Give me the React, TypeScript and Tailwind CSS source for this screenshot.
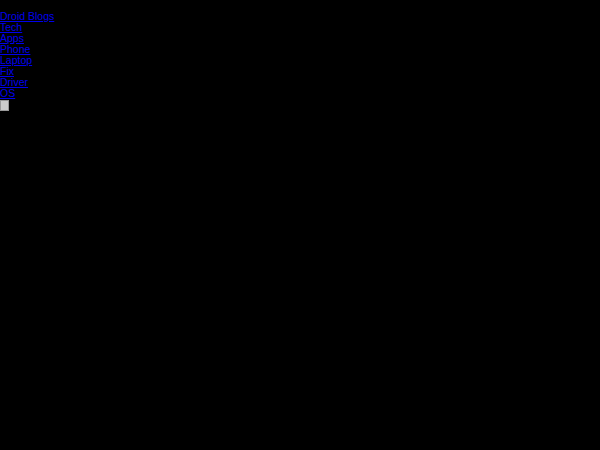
import React from "react";

const links = ["Droid Blogs", "Tech", "Apps", "Phone", "Laptop", "Fix", "Driver", "OS"];

export default function App() {
  return (
    <div className="w-[600px] h-[450px] bg-black pt-[11px] font-['Liberation_Sans',Arial,sans-serif] text-[10.5px] leading-[11px]">
      <ul className="flex flex-col">
        {links.map((l) => (
          <li key={l}>
            <a href="#" className="text-[#0000EE] underline">
              {l}
            </a>
          </li>
        ))}
      </ul>
      <button className="block mt-[1px] w-[9px] h-[11px] bg-[#cccccc] border border-[#999999]" aria-label="menu"></button>
    </div>
  );
}
